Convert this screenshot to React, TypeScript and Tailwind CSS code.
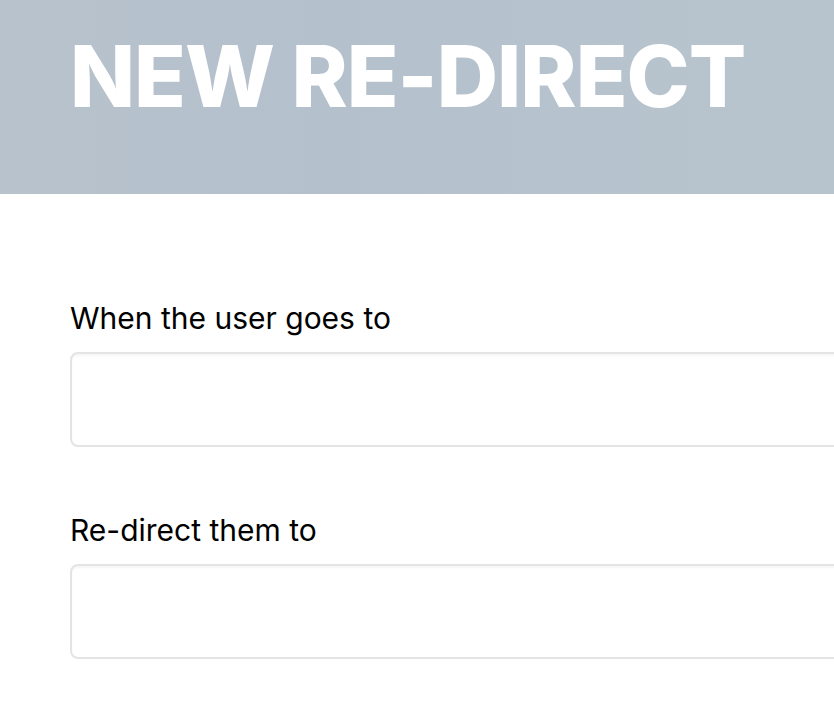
export default function App() {
  return (
    <div className="min-h-screen w-full overflow-hidden bg-white font-['Inter',sans-serif]">
      <header className="h-[194px] w-full bg-[linear-gradient(90deg,#b7c2cc,#b4c0cc_40%,#b8c4cd)] pl-[70px] pt-[34px]">
        <h1 className="whitespace-nowrap text-[85px] font-extrabold leading-none tracking-[-1px] text-white">NEW RE-DIRECT</h1>
      </header>

      <main className="pl-[70px] pt-[106px]">
        <label className="block text-[30px] leading-[36px] text-black">When the user goes to</label>
        <input
          type="text"
          className="mt-4 block h-[95px] w-[900px] rounded-lg border-2 border-[#e4e4e4] bg-white shadow-[inset_0_2px_2px_rgba(0,0,0,0.04)] outline-none"
        />

        <label className="mt-[65px] block text-[30px] leading-[36px] text-black">Re-direct them to</label>
        <input
          type="text"
          className="mt-4 block h-[95px] w-[900px] rounded-lg border-2 border-[#e4e4e4] bg-white shadow-[inset_0_2px_2px_rgba(0,0,0,0.04)] outline-none"
        />
      </main>
    </div>
  )
}
